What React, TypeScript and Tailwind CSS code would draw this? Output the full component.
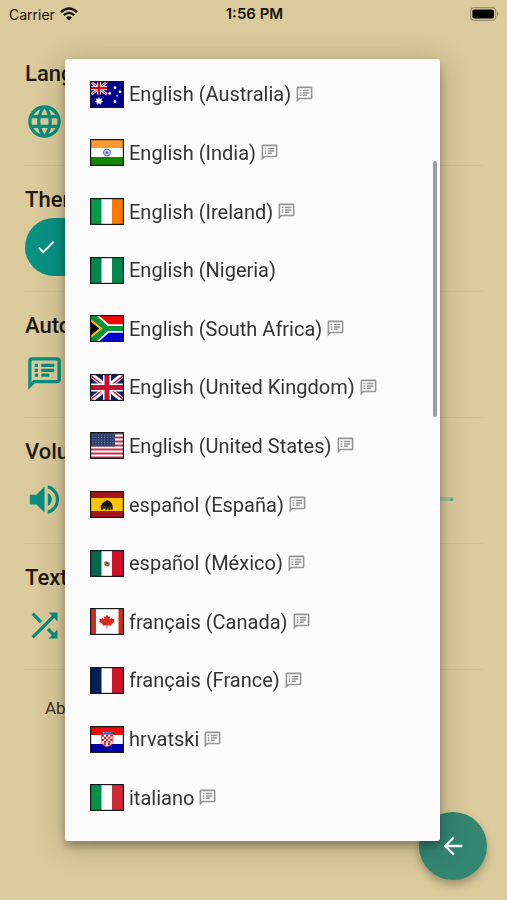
import type { ReactNode } from "react";
import {
  MdArrowBack,
  MdCheck,
  MdLanguage,
  MdOutlineSpeakerNotes,
  MdShuffle,
  MdVolumeUp,
} from "react-icons/md";

interface Language {
  label: string;
  flag: ReactNode;
  speech: boolean;
}

// ───────────────── Flags ─────────────────
const Flag = ({ children }: { children: ReactNode }) => (
  <svg viewBox="0 0 34 27" className="h-[27px] w-[34px] shrink-0" aria-hidden="true">
    {children}
    <rect x="0.5" y="0.5" width="33" height="26" fill="none" stroke="#16181c" strokeWidth="1.4" />
  </svg>
);

const Vertical = ({ colors, children }: { colors: string[]; children?: ReactNode }) => (
  <Flag>
    <rect width="12" height="27" fill={colors[0]} />
    <rect x="11.5" width="11" height="27" fill={colors[1]} />
    <rect x="22" width="12" height="27" fill={colors[2]} />
    {children}
  </Flag>
);

const Horizontal = ({ colors, children }: { colors: string[]; children?: ReactNode }) => (
  <Flag>
    <rect width="34" height="9" fill={colors[0]} />
    <rect y="9" width="34" height="9" fill={colors[1]} />
    <rect y="18" width="34" height="9" fill={colors[2]} />
    {children}
  </Flag>
);

const Australia = () => (
  <Flag>
    <rect width="34" height="27" fill="#00008b" />
    <path d="M1 1L17 13.5M17 1L1 13.5" stroke="#fff" strokeWidth="2.6" />
    <path d="M1 1L17 13.5M17 1L1 13.5" stroke="#e8112d" strokeWidth="1" />
    <path d="M9 1V13.5M1 7.2H17" stroke="#fff" strokeWidth="4" />
    <path d="M9 1V13.5M1 7.2H17" stroke="#f00000" strokeWidth="2.2" />
    <path
      d="M9 16.4l.9 1.9 2-.6-.8 1.9 1.8 1.1-2 .5v2.1L9 22l-1.9 1.3v-2.1l-2-.5 1.8-1.1-.8-1.9 2 .6z"
      fill="#fff"
      stroke="#fff"
      strokeWidth="0.5"
    />
    <g fill="#fff">
      <circle cx="25" cy="6.7" r="1.4" />
      <circle cx="30" cy="10.8" r="1.4" />
      <circle cx="19.7" cy="12.4" r="1.4" />
      <circle cx="25" cy="20.7" r="1.4" />
      <circle cx="27.2" cy="14.8" r="0.8" />
    </g>
  </Flag>
);

const India = () => (
  <Horizontal colors={["#ff9933", "#fff", "#138808"]}>
    <circle cx="17" cy="13.5" r="3.5" fill="#d4d4f2" stroke="#5b5bb8" strokeWidth="0.9" />
    <path
      d="M17 10v7M13.5 13.5h7M14.5 11l5 5M19.5 11l-5 5"
      stroke="#7474c4"
      strokeWidth="0.4"
    />
    <circle cx="17" cy="13.5" r="1" fill="#3d3da8" />
  </Horizontal>
);

const SouthAfrica = () => (
  <Flag>
    <rect width="34" height="13.5" fill="#ff0000" />
    <rect y="13.5" width="34" height="13.5" fill="#0000d6" />
    <path d="M1 -1L17 13.5L1 28M17 13.5H34" fill="none" stroke="#fff" strokeWidth="8.6" />
    <path d="M0 0V27L16 13.5z" fill="#009639" />
    <path d="M0 3.2V23.8L12.6 13.5z" fill="#ffb81c" />
    <path d="M0 6V21L9.4 13.5z" fill="#000" />
    <path d="M1 -1L17 13.5L1 28M17 13.5H34" fill="none" stroke="#009639" strokeWidth="5" />
  </Flag>
);

const UnitedKingdom = () => (
  <Flag>
    <rect width="34" height="27" fill="#012169" />
    <path d="M0 0L34 27M34 0L0 27" stroke="#fff" strokeWidth="5" />
    <path d="M0 1L17 14.5M17 12.5L34 26M34 1L17 14.5M17 12.5L0 26" stroke="#c8102e" strokeWidth="1.5" />
    <path d="M17 0V27M0 13.5H34" stroke="#fff" strokeWidth="8" />
    <path d="M17 0V27M0 13.5H34" stroke="#c8102e" strokeWidth="5" />
  </Flag>
);

const UnitedStates = () => (
  <Flag>
    <rect width="34" height="27" fill="#fff" />
    {[0, 4, 8, 12, 16, 20, 24].map((y) => (
      <rect key={y} y={y + 0.5} width="34" height="2" fill="#c8304a" />
    ))}
    <rect width="25" height="14.5" fill="#2e3f70" />
    {[3, 5.5, 8, 10.5, 13].map((y) => (
      <path key={y} d={`M2.5 ${y}H24`} stroke="#8d9ab8" strokeWidth="0.8" strokeDasharray="0.9 2" />
    ))}
  </Flag>
);

const Spain = () => (
  <Flag>
    <rect width="34" height="27" fill="#aa151b" />
    <rect y="7" width="34" height="13" fill="#ffc400" />
    {/* bull */}
    <path
      d="M11 18.5v-4l1-1v-1l1.2-.4 1-1.2 1-.2.8-1 1.4-.2 1.4.4 1.8 1.2 1.2 1.8.6 2v3.6h-1.4v-2.6l-.8-.2v3h-1.6v-3h-1l-.4 3h-1.4v-3l-.6-.2-.4 2.2h-1.2v-2.2l-.6.4v2.6z"
      fill="#15120a"
      stroke="#15120a"
      strokeWidth="0.4"
    />
  </Flag>
);

const Mexico = () => (
  <Vertical colors={["#006847", "#fff", "#ce1126"]}>
    <path d="M14 12.5q3-2.6 6 .4l-.8 3q-2.4 1.6-4.4-.4z" fill="#9a7b5a" />
    <path d="M14.4 14.2q2.6 3 5 .4" fill="none" stroke="#4c7a4a" strokeWidth="1" />
    <circle cx="17" cy="13" r="1.1" fill="#6b3f2a" />
  </Vertical>
);

const Canada = () => (
  <Flag>
    <rect width="34" height="27" fill="#fff" />
    <rect width="6" height="27" fill="#d52b1e" />
    <rect x="28.5" width="6" height="27" fill="#d52b1e" />
    <path
      d="M17 6.4l1.5 2.5 1.7-.7-.6 3.3 2-1.7.5 1.2 2.6-.3-.8 2.2.9.7-3.7 2.9.4 1.3-4.1-.5v3.1h-.8v-3.1l-4.1.5.4-1.3-3.7-2.9.9-.7-.8-2.2 2.6.3.5-1.2 2 1.7-.6-3.3 1.7.7z"
      fill="#d52b1e"
    />
  </Flag>
);

const Croatia = () => (
  <Horizontal colors={["#ff0000", "#fff", "#0000a8"]}>
    <path d="M11.5 8h11v7.5q-.5 4.5-5.5 5.2-5-.7-5.5-5.2z" fill="#fff" stroke="#e5202c" strokeWidth="0.6" />
    {[9, 11.2, 13.4, 15.6, 17.8].map((y, i) => (
      <path
        key={y}
        d={i < 4 ? `M${i % 2 ? 14 : 11.8} ${y + 0.6}H22.4` : `M13.6 ${y + 0.6}H20.6`}
        stroke="#f0101c"
        strokeWidth="2.2"
        strokeDasharray="2.1 2.1"
      />
    ))}
    <path d="M10.5 5l2.3 1.2L15 4.6l2 1.1 2-1.1 2.2 1.6L23.5 5l-.9 3.4H11.4z" fill="#3f5fb0" />
    <path d="M13 6.8h1.4M16.3 6.8h1.4M19.6 6.8H21" stroke="#a8b9d8" strokeWidth="1" />
  </Horizontal>
);

const languages: Language[] = [
  { label: "English (Australia)", flag: <Australia />, speech: true },
  { label: "English (India)", flag: <India />, speech: true },
  { label: "English (Ireland)", flag: <Vertical colors={["#009a49", "#fff", "#ff7900"]} />, speech: true },
  { label: "English (Nigeria)", flag: <Vertical colors={["#008751", "#fff", "#008751"]} />, speech: false },
  { label: "English (South Africa)", flag: <SouthAfrica />, speech: true },
  { label: "English (United Kingdom)", flag: <UnitedKingdom />, speech: true },
  { label: "English (United States)", flag: <UnitedStates />, speech: true },
  { label: "español (España)", flag: <Spain />, speech: true },
  { label: "español (México)", flag: <Mexico />, speech: true },
  { label: "français (Canada)", flag: <Canada />, speech: true },
  { label: "français (France)", flag: <Vertical colors={["#00205b", "#fff", "#d0142c"]} />, speech: true },
  { label: "hrvatski", flag: <Croatia />, speech: true },
  { label: "italiano", flag: <Vertical colors={["#009246", "#fff", "#ce2b37"]} />, speech: true },
];

// ───────────────── Status bar ─────────────────
const StatusBar = () => (
  <header className="grid h-7 grid-cols-3 items-center pl-[9px] pr-[7px] font-['Inter',sans-serif] text-[15px] text-[#15130e]">
    <div className="flex items-center gap-[5px]">
      <span className="text-[14px]">Carrier</span>
      <svg viewBox="0 0 18 14" className="h-[14px] w-[18px]" aria-hidden="true">
        <path d="M1 5.2Q9-2.2 17 5.2" fill="none" stroke="currentColor" strokeWidth="2.4" />
        <path d="M3.8 8.2q5.2-4.6 10.4 0" fill="none" stroke="currentColor" strokeWidth="2.3" />
        <path d="M6 10.6q3-2.7 6 0l-3 3z" fill="currentColor" />
      </svg>
    </div>
    <span className="text-center font-semibold">1:56 PM</span>
    <svg viewBox="0 0 30 14" className="h-[14px] w-[30px] justify-self-end" aria-hidden="true">
      <rect x="0.7" y="0.7" width="25" height="12.6" rx="3.4" fill="none" stroke="#9b9271" strokeWidth="1.2" />
      <rect x="2.4" y="2.4" width="21.6" height="9.2" rx="1.8" fill="#000" />
      <path d="M27.2 4.8q2.4 2.2 0 4.4z" fill="#837b62" />
    </svg>
  </header>
);

interface SettingProps {
  title: string;
  children: ReactNode;
}

const Setting = ({ title, children }: SettingProps) => (
  <section className="border-b border-[#d2c195] pb-3.5 pt-[22px]">
    <h2 className="text-[22px] font-medium leading-6">{title}</h2>
    <div className="mt-[5px] flex h-[60px] items-center text-[39px] text-[#088f7d]">{children}</div>
  </section>
);

// ───────────────── Language picker ─────────────────
const LanguageDialog = () => (
  <div className="fixed inset-0 flex py-[59px] pl-[65px] pr-[67px]">
    <div
      role="dialog"
      aria-label="Language"
      className="relative flex-1 rounded-[3px] bg-[#fbfbfb] shadow-[0_5px_10px_0_rgba(0,0,0,0.3),0_4px_30px_4px_rgba(0,0,0,0.16)]"
    >
      <ul className="flex h-full flex-col pb-3.5 pt-1.5">
        {languages.map((lang) => (
          <li key={lang.label} className="flex min-h-0 flex-1">
            <button type="button" className="flex w-full items-center pl-[25px] text-left">
              {lang.flag}
              <span className="ml-[5px] whitespace-nowrap text-[20px] leading-6 text-[#333]">{lang.label}</span>
              {lang.speech && <MdOutlineSpeakerNotes className="ml-1 size-[19px] shrink-0 text-[#949494]" />}
            </button>
          </li>
        ))}
      </ul>
      {/* Scroll indicator */}
      <div className="absolute right-[3px] top-[13%] h-64 w-1 rounded-full bg-[#9c9c9c]" />
    </div>
  </div>
);

const App = () => (
  <div className="relative min-h-screen overflow-hidden bg-[#dbca9b] font-['Roboto',sans-serif] text-[#1f1a10]">
    <StatusBar />

    <main className="pl-[25px] pr-6 pt-3">
      <Setting title="Language">
        <MdLanguage />
      </Setting>
      <Setting title="Theme">
        <button
          type="button"
          aria-label="Theme"
          className="flex h-[58px] w-40 items-center rounded-full bg-[#089282] pl-2.5 text-[22px] text-white"
        >
          <MdCheck />
        </button>
      </Setting>
      <Setting title="Auto">
        <MdOutlineSpeakerNotes />
      </Setting>
      <Setting title="Volume">
        <MdVolumeUp className="shrink-0" />
        <input
          type="range"
          aria-label="Volume"
          defaultValue={50}
          className="ml-4 h-1 min-w-0 flex-1 appearance-none rounded-full bg-[#a3c09a]"
        />
        <span className="-ml-1 mr-[30px] size-[3px] rounded-full bg-[#3fae84]" />
      </Setting>
      <Setting title="Text">
        <MdShuffle />
      </Setting>
      <a href="#about" className="ml-5 mt-[26px] inline-block text-[17px] leading-6 text-[#3c3525]">
        About
      </a>
    </main>

    <button
      type="button"
      aria-label="Back"
      className="absolute bottom-5 right-5 flex size-[68px] items-center justify-center rounded-full bg-[#338670] text-[28px] text-white shadow-[0_5px_9px_rgba(0,0,0,0.28)]"
    >
      <MdArrowBack />
    </button>

    <LanguageDialog />
  </div>
);

export default App;
